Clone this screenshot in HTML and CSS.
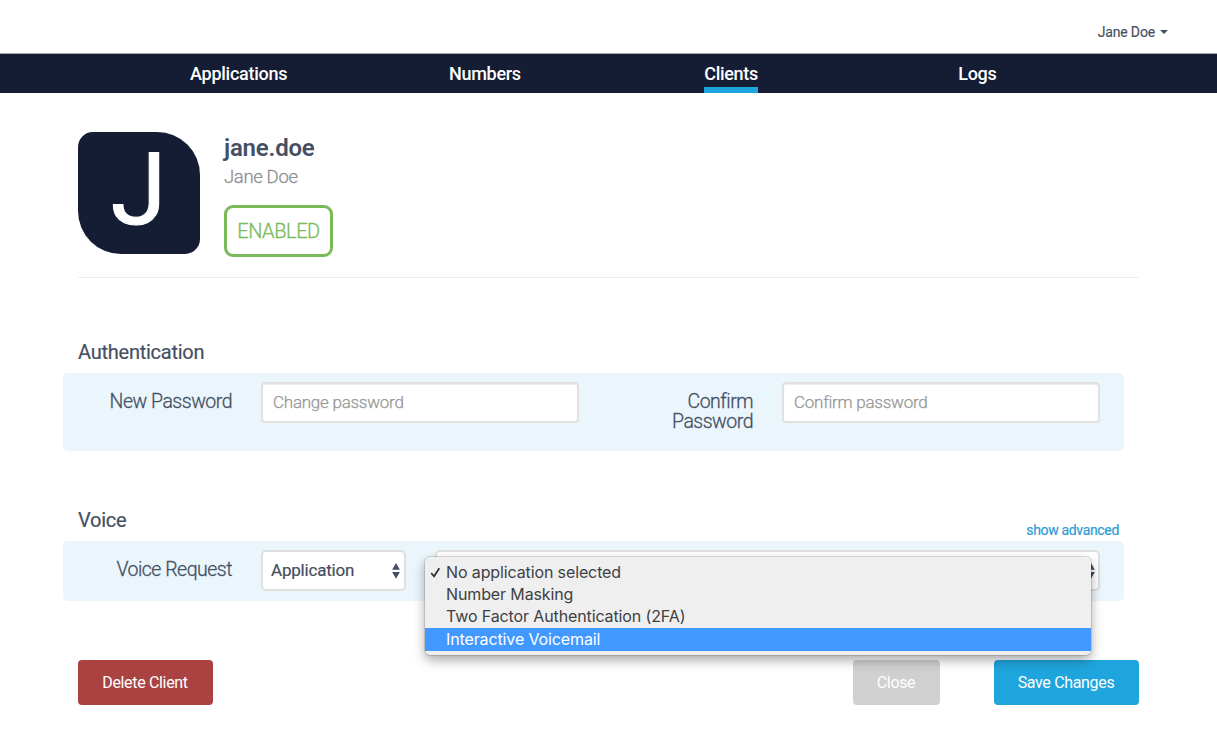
FILE: index.html
```html
<!DOCTYPE html>
<html lang="en">
<head>
<meta charset="utf-8">
<title>Client details</title>
<link rel="stylesheet" href="styles.css">
</head>
<body>
<header class="topbar">
  <span class="user">Jane Doe</span>
  <span class="caret"></span>
</header>
<nav class="nav">
  <a class="nav-item"><span>Applications</span></a>
  <a class="nav-item"><span>Numbers</span></a>
  <a class="nav-item active"><span>Clients</span></a>
  <a class="nav-item"><span>Logs</span></a>
</nav>
<main class="content">
  <section class="profile">
    <div class="avatar">J</div>
    <div class="identity">
      <h1 class="username">jane.doe</h1>
      <div class="fullname">Jane Doe</div>
      <div class="status">ENABLED</div>
    </div>
  </section>

  <div class="section-head auth-head"><h2 class="title">Authentication</h2></div>
  <section class="panel auth-panel">
    <label class="label">New Password</label>
    <input class="field" type="text" placeholder="Change password">
    <label class="label label-confirm">Confirm Password</label>
    <input class="field field-confirm" type="text" placeholder="Confirm password">
  </section>

  <div class="section-head voice-head">
    <h2 class="title">Voice</h2>
    <a class="advanced">show advanced</a>
  </div>
  <section class="panel voice-panel">
    <label class="label">Voice Request</label>
    <div class="select">
      <span class="select-text">Application</span>
      <svg class="arrows" width="8" height="16" viewBox="0 0 8 16"><path d="M4 0L7.9 6.8H.1zM4 15.8L.1 9h7.8z"/></svg>
    </div>
    <div class="select select-app">
      <svg class="arrows" width="8" height="16" viewBox="0 0 8 16"><path d="M4 0L7.9 6.8H.1zM4 15.8L.1 9h7.8z"/></svg>
      <ul class="menu">
        <li class="option"><svg class="check" width="11" height="11" viewBox="0 0 11 11"><path d="M1.2 6.2L4.1 9.3L9.3 1.2"/></svg><span>No application selected</span></li>
        <li class="option"><span>Number Masking</span></li>
        <li class="option"><span>Two Factor Authentication (2FA)</span></li>
        <li class="option chosen"><span>Interactive Voicemail</span></li>
      </ul>
    </div>
  </section>

  <footer class="actions">
    <button class="btn delete">Delete Client</button>
    <button class="btn close">Close</button>
    <button class="btn save">Save Changes</button>
  </footer>
</main>
</body>
</html>
```
FILE: styles.css
```css
* { box-sizing: border-box; }
body { margin: 0; height: 746px; background: #fff; color: #454f63; font-family: Roboto, "Liberation Sans", sans-serif; overflow: hidden; }
h1, h2, ul { margin: 0; padding: 0; list-style: none; }

.topbar { height: 54px; padding: 11px 49px 0 0; display: flex; justify-content: flex-end; align-items: center; border-bottom: 1px solid #a9acb3; }
.user { font-size: 14px; line-height: 20px; letter-spacing: -.15px; -webkit-text-stroke: .15px; }
.caret { margin-left: 5px; border: 4px solid transparent; border-top-color: #454f63; border-bottom: 0; }

.nav { height: 39px; padding: 0 116px; display: grid; grid-template-columns: repeat(4, 1fr); background: #151d35; }
.nav-item { display: flex; justify-content: center; color: #fff; font-size: 18px; font-weight: 500; line-height: 39px; letter-spacing: -.28px; }
.nav-item span { height: 39px; margin-right: 1px; }
.active span { box-shadow: inset 0 -6px #1fa5dd; }

.content { padding: 39px 78px 0; }
.profile { height: 146px; display: flex; gap: 24px; border-bottom: 1px solid #eeeeef; }
.avatar { width: 122px; height: 122px; border-radius: 15px 43px 15px 43px; background: #151d35; color: #fff; font-size: 101px; -webkit-text-stroke: 1px; line-height: 115px; text-align: center; text-indent: -1px; }
.username { font-size: 24px; line-height: 32px; font-weight: 600; letter-spacing: -.2px; }
.fullname { color: #8f8f94; font-size: 18.5px; line-height: 26px; font-weight: 300; letter-spacing: -.35px; -webkit-text-stroke: .3px; }
.status { width: 109px; height: 52px; margin-top: 15px; border: 3px solid #7aba59; border-radius: 9px; color: #7aba59; font-size: 20px; font-weight: 300; line-height: 47px; letter-spacing: -.42px; text-align: center; -webkit-text-stroke: .3px; }

.section-head { display: flex; justify-content: space-between; align-items: flex-start; }
.auth-head { height: 34px; margin-top: 61px; }
.voice-head { height: 34px; margin-top: 56px; }
.title { font-size: 20px; line-height: 26px; font-weight: 400; letter-spacing: -.25px; -webkit-text-stroke: .2px; }
.advanced { margin: 14px 20px 0 0; color: #2e9bd3; font-size: 14px; line-height: 18px; letter-spacing: -.34px; -webkit-text-stroke: .2px; }

.panel { margin: 0 15px 0 -15px; padding: 9px 24px 0 30px; display: flex; align-items: flex-start; background: #eaf6fc; border-radius: 5px; }
.auth-panel { height: 78px; }
.voice-panel { height: 60px; }
.label { width: 139px; margin-right: 29px; padding-top: 10px; text-align: right; font-size: 19.5px; line-height: 20px; font-weight: 300; letter-spacing: -.5px; -webkit-text-stroke: .3px; }
.label-confirm { width: 90px; margin-left: 84px; }
.field { width: 318px; height: 41px; padding: 0 10px 1px; color: #454f63; background: #fff; border: 2px solid #e1e1e1; border-radius: 4px; font: 300 17px Roboto, "Liberation Sans", sans-serif; letter-spacing: -.25px; box-shadow: inset 0 1px 1px #eee; -webkit-text-stroke: .25px; }
.field::placeholder { color: #969696; opacity: 1; }
.select { position: relative; width: 145px; height: 41px; margin-right: 29px; padding: 0 4px 0 8px; display: flex; align-items: center; justify-content: space-between; background: #fff; border: 2px solid #dfdfdf; border-radius: 5px; font-size: 17px; letter-spacing: -.2px; }
.select-text { padding-bottom: 2px; -webkit-text-stroke: .2px; }
.select-app { width: 665px; margin-right: 0; padding-right: 3px; justify-content: flex-end; }
.arrows { fill: #454f63; }

.menu { position: absolute; left: -12px; top: 5px; width: 666px; height: 98px; padding-top: 4px; background: #efefef; border-radius: 5px; box-shadow: 0 0 0 1px rgba(0,0,0,.12), 0 5px 12px rgba(0,0,0,.35); font-family: Inter, "Liberation Sans", sans-serif; font-size: 16px; letter-spacing: -.12px; color: #404044; }
.option { height: 22.4px; padding-left: 5px; display: flex; align-items: center; line-height: 22px; }
.option span { margin: -1px 0 0 16px; }
.check { margin-right: -11px; fill: none; stroke: #333; stroke-width: 1.8; }
.chosen { background: #4199ff; color: #fff; }

.actions { margin-top: 59px; display: flex; }
.btn { height: 45px; padding: 0 1px 0 0; border: 0; border-radius: 4px; color: #fff; font: 400 16px Roboto, "Liberation Sans", sans-serif; letter-spacing: -.33px; }
.delete { width: 135px; background: #a94241; }
.close { width: 87px; margin-left: auto; margin-right: 54px; background: #d0d0d0; }
.save { width: 145px; background: #1fa5dd; }
```
